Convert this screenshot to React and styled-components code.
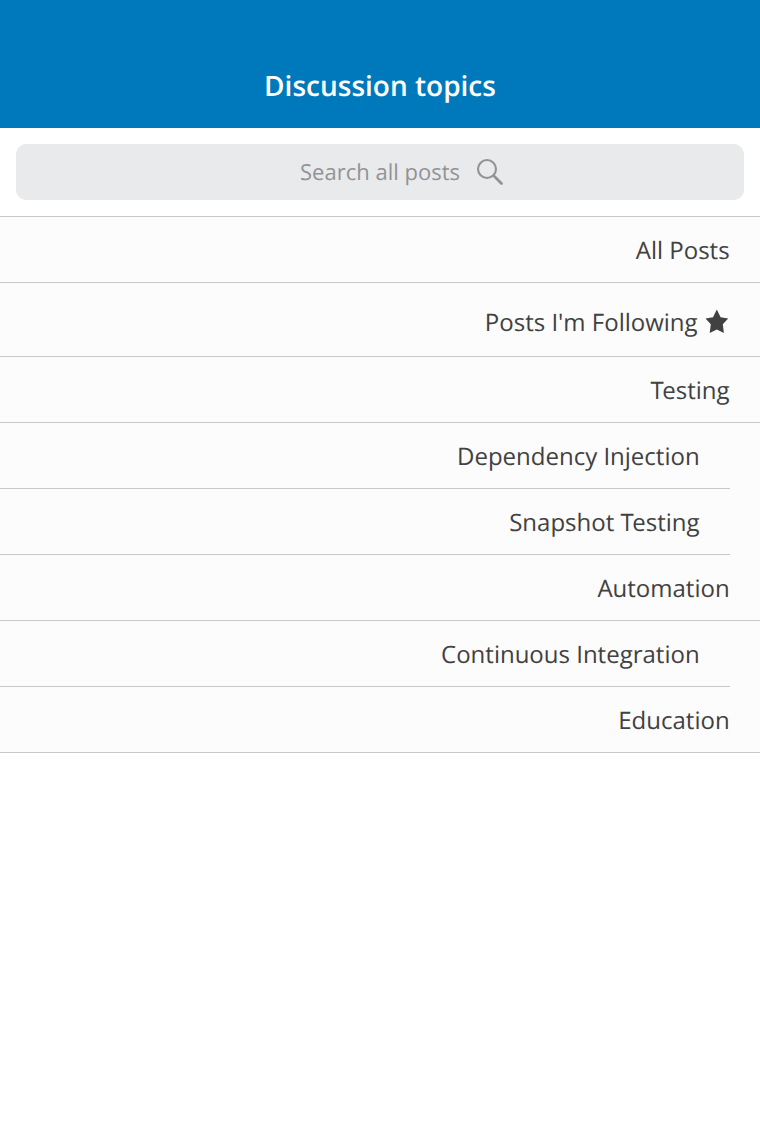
import React from "react";
import styled, { createGlobalStyle } from "styled-components";

const GlobalStyle = createGlobalStyle`
  * { box-sizing: border-box; }
  body {
    margin: 0;
    background: #fff;
    font-family: "Open Sans", sans-serif;
    font-kerning: normal;
    text-rendering: geometricPrecision;
  }
`;

const Screen = styled.main`
  display: flex;
  flex-direction: column;
  min-height: 1136px;
`;

const Header = styled.header`
  display: flex;
  align-items: center;
  justify-content: center;
  height: 128px;
  padding-top: 43px;
  background: #0079bc;
`;

const Title = styled.h1`
  margin: 0;
  color: #fff;
  font-size: 28px;
  font-weight: 600;
  line-height: 38px;
`;

const SearchBar = styled.div`
  padding: 16px;
  background: #fff;
`;

const SearchField = styled.div`
  display: flex;
  align-items: center;
  justify-content: center;
  gap: 16px;
  height: 56px;
  padding-left: 44px;
  border-radius: 10px;
  background: #e9eaec;
  color: #929394;
  font-size: 22px;
  line-height: 30px;
`;

const SearchIcon = styled.svg`
  width: 28px;
  height: 28px;
`;

const TopicList = styled.ul`
  margin: 0;
  padding: 0;
  list-style: none;
  border-top: 1px solid #c8c8c9;
  background: #fcfcfc;
`;

const Topic = styled.li`
  padding-right: ${({ $nested }) => ($nested ? "30px" : "0")};
`;

const TopicLabel = styled.div`
  display: flex;
  align-items: center;
  justify-content: flex-end;
  gap: 8px;
  height: ${({ $tall }) => ($tall ? "74px" : "66px")};
  padding: ${({ $tall }) => ($tall ? "6px" : "2px")} 30px 0 0;
  border-bottom: 1px solid #c8c8c9;
  color: #414141;
  font-size: 24px;
  line-height: 33px;
`;

const TopicName = styled.span`
  padding-right: 0.4px;
`;

const TightInitial = styled.span`
  letter-spacing: -1.4px;
`;

const StarIcon = styled.svg`
  width: 24px;
  height: 24px;
  margin-bottom: 1px;
  overflow: visible;
`;

const topics = [
  { name: "All Posts" },
  { name: "Posts I'm Following", starred: true },
  { name: "Testing" },
  { name: "Dependency Injection", nested: true },
  { name: "Snapshot Testing", nested: true },
  { name: "Automation" },
  { name: "Continuous Integration", nested: true },
  { name: "Education" },
];

// Pulls the "T" of "Te" closer to the letter that follows it.
function kernedName(name) {
  const [before, after] = name.split("Te");
  if (after === undefined) return name;
  return (
    <>
      {before}
      <TightInitial>T</TightInitial>e{after}
    </>
  );
}

export default function App() {
  return (
    <Screen>
      <GlobalStyle />
      <Header>
        <Title>Discussion topics</Title>
      </Header>
      <SearchBar>
        <SearchField>
          <span>Search all posts</span>
          <SearchIcon viewBox="0 0 28 28" fill="none" stroke="#929394">
            <circle cx="11" cy="11" r="9" strokeWidth="2.1" />
            <path d="M17 17L18.5 18.5" strokeWidth="2" />
            <path d="M18.5 18.5L25.5 25.5" strokeWidth="2.8" strokeLinecap="round" />
          </SearchIcon>
        </SearchField>
      </SearchBar>
      <TopicList>
        {topics.map(({ name, nested, starred }) => (
          <Topic key={name} $nested={nested}>
            <TopicLabel $tall={starred}>
              <TopicName>{kernedName(name)}</TopicName>
              {starred && (
                <StarIcon viewBox="0 0 24 24" fill="#414141">
                  <path d="M10.8 -.4L14.6 7.2L22.2 8.5L16.8 14.2L17.9 22.9L10.8 19.5L3.7 22.9L4.8 14.2L-.5 8.5L7 7.2Z" />
                </StarIcon>
              )}
            </TopicLabel>
          </Topic>
        ))}
      </TopicList>
    </Screen>
  );
}
